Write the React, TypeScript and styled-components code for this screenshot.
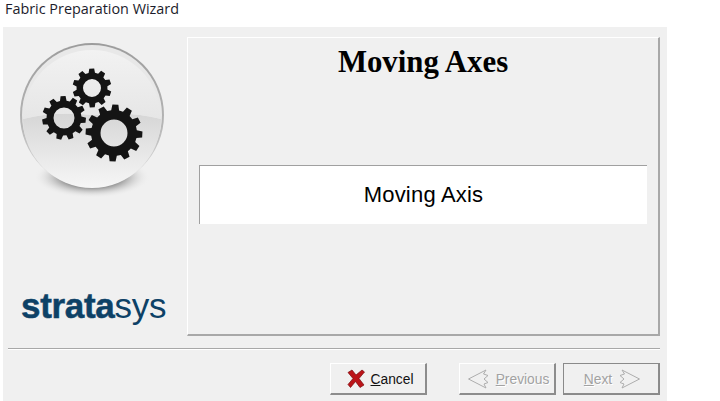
import styled, { createGlobalStyle } from 'styled-components';

const GlobalStyle = createGlobalStyle`
  html, body {
    margin: 0;
    background: #fff;
  }
`;

// toothed wheel with a round hole, drawn with evenodd
const gearPath = (cx: number, cy: number, outer: number, root: number, hole: number, teeth: number, start = 0) => {
  const step = (Math.PI * 2) / teeth;
  const pts: string[] = [];
  for (let i = 0; i < teeth; i++) {
    const a = start + i * step;
    const corners: [number, number][] = [
      [root, a - step * 0.33],
      [outer, a - step * 0.2],
      [outer, a + step * 0.2],
      [root, a + step * 0.33],
    ];
    corners.forEach(([r, t]) => {
      pts.push(`${(cx + r * Math.cos(t)).toFixed(2)} ${(cy + r * Math.sin(t)).toFixed(2)}`);
    });
  }
  const ring = `M${cx - hole} ${cy}a${hole} ${hole} 0 1 0 ${hole * 2} 0a${hole} ${hole} 0 1 0 ${-hole * 2} 0Z`;
  return `M${pts.join('L')}Z${ring}`;
};

const GearBall = () => (
  <BallSvg viewBox="0 0 184 170" width="184" height="170">
    <defs>
      <linearGradient id="ballRim" x1="0" y1="0" x2="0" y2="1">
        <stop offset="0%" stopColor="#9c9c9c" />
        <stop offset="55%" stopColor="#b4b4b4" />
        <stop offset="100%" stopColor="#e2e2e2" />
      </linearGradient>
      <linearGradient id="ballTop" x1="0" y1="0" x2="0" y2="1">
        <stop offset="0%" stopColor="#f2f2f2" />
        <stop offset="100%" stopColor="#e6e6e6" />
      </linearGradient>
      <linearGradient id="ballLow" x1="0" y1="0" x2="0" y2="1">
        <stop offset="0%" stopColor="#d6d6d6" />
        <stop offset="100%" stopColor="#f6f6f6" />
      </linearGradient>
      <radialGradient id="ballShadow" cx="50%" cy="50%" r="50%">
        <stop offset="45%" stopColor="#7c7c7c" />
        <stop offset="100%" stopColor="#f0f0f0" stopOpacity="0" />
      </radialGradient>
    </defs>
    <ellipse cx="89" cy="140" rx="58" ry="21" fill="url(#ballShadow)" />
    <circle cx="89" cy="78" r="72" fill="url(#ballRim)" />
    <circle cx="89" cy="78" r="70" fill="#e8e8e8" />
    <path d="M20 82a69 69 0 0 0 138 0q-30 -8 -69 -4q-39 -4 -69 4Z" fill="url(#ballLow)" />
    <path d="M20 82a69 69 0 1 1 138 0q-30 -8 -69 -4q-39 -4 -69 4Z" fill="url(#ballTop)" />
    <GearPath d={gearPath(89, 51, 19.5, 15.5, 9, 10, 0.3)} />
    <GearPath d={gearPath(61, 81, 22, 17.5, 10.5, 11, 0.1)} />
    <GearPath d={gearPath(111, 96, 28.5, 23, 13.5, 12, 0.05)} />
  </BallSvg>
);

const CancelIcon = () => (
  <svg width="18" height="19" viewBox="0 0 18 19">
    <path
      d="M1 3.5L5 1L9 6L15 1L17.5 3L12 9.5L17 16L13 18.5L8.5 12.5L3.5 18.5L1 15.5L6 9.5Z"
      fill="#bb1419"
      stroke="#7a0a0d"
      strokeWidth="0.7"
      strokeLinejoin="round"
    />
  </svg>
);

const ArrowLeft = () => (
  <svg width="22" height="20" viewBox="0 0 22 20" fill="none">
    <path
      d="M0.5 10L18 1L15.5 5L20 6.5L16 10L20 13.5L16 15L18 19Z"
      stroke="#adadad"
      strokeWidth="1"
    />
  </svg>
);

const ArrowRight = () => (
  <svg width="22" height="20" viewBox="0 0 22 20" fill="none">
    <path
      d="M21.5 10L4 1L6.5 5L2 6.5L6 10L2 13.5L6 15L4 19Z"
      stroke="#adadad"
      strokeWidth="1"
    />
  </svg>
);

const App = () => (
  <Page>
    <GlobalStyle />
    <TitleBar>Fabric Preparation Wizard</TitleBar>
    <Dialog>
      <Body>
        <Side>
          <GearBall />
          <Logo>
            <b>strata</b>sys
          </Logo>
        </Side>
        <Panel>
          <Heading>Moving Axes</Heading>
          <AxisBox>Moving Axis</AxisBox>
        </Panel>
      </Body>
      <Separator />
      <Footer>
        <WizardButton $shift={4}>
          <CancelIcon />
          <ButtonLabel>
            <u>C</u>ancel
          </ButtonLabel>
        </WizardButton>
        <NavButtons>
          <WizardButton disabled $shift={3}>
            <ArrowLeft />
            <ButtonLabel>
              <u>P</u>revious
            </ButtonLabel>
          </WizardButton>
          <WizardButton disabled $isDefault $shift={2}>
            <ButtonLabel>
              <u>N</u>ext
            </ButtonLabel>
            <ArrowRight />
          </WizardButton>
        </NavButtons>
      </Footer>
    </Dialog>
  </Page>
);

export default App;

const Page = styled.div`
  width: 720px;
  height: 401px;
  overflow: hidden;
  display: flex;
  flex-direction: column;
`;

const TitleBar = styled.div`
  height: 27px;
  padding: 0 0 0 5px;
  box-sizing: border-box;
  font: 14.4px/18px 'Open Sans', sans-serif;
  color: #1c1c2c;
`;

const Dialog = styled.div`
  width: 664px;
  height: 374px;
  margin-left: 3px;
  padding: 10px 7px 0 0;
  box-sizing: border-box;
  background: #f0f0f0;
`;

const Body = styled.div`
  display: flex;
  height: 299px;
`;

const Side = styled.div`
  width: 184px;
  display: flex;
  flex-direction: column;
`;

const BallSvg = styled.svg`
  display: block;
`;

const GearPath = styled.path`
  fill: #141414;
  fill-rule: evenodd;
`;

const Logo = styled.div`
  margin-top: auto;
  padding: 0 0 10px 18px;
  font: 35px/40px 'Liberation Sans', Arial, sans-serif;
  letter-spacing: -0.3px;
  color: #0d4166;

  b {
    font-weight: 700;
    -webkit-text-stroke: 0.5px #0d4166;
  }
`;

const Panel = styled.div`
  flex: 1;
  padding: 5px 11px 0;
  box-sizing: border-box;
  border-top: 1px solid #fff;
  border-left: 1px solid #fff;
  border-right: 2px solid #a8a8a8;
  border-bottom: 2px solid #a8a8a8;
`;

const Heading = styled.h1`
  margin: 0;
  height: 122px;
  font: 700 30.8px/38px 'Liberation Serif', 'Times New Roman', serif;
  color: #000;
  text-align: center;
`;

const AxisBox = styled.div`
  height: 59px;
  display: flex;
  align-items: center;
  justify-content: center;
  background: #fff;
  border-top: 1px solid #a0a0a0;
  border-left: 1px solid #a0a0a0;
  box-sizing: border-box;
  font: 22px/26px 'Liberation Sans', Arial, sans-serif;
  letter-spacing: 0.2px;
  color: #000;
`;

const Separator = styled.div`
  height: 2px;
  margin: 12px 0 0 5px;
  background: linear-gradient(#a8a8a8 50%, #fff 50%);
`;

const Footer = styled.div`
  display: flex;
  justify-content: flex-end;
  align-items: flex-start;
  gap: 32px;
  margin-top: 13px;
`;

const NavButtons = styled.div`
  display: flex;
  gap: 7px;
`;

const ButtonLabel = styled.span`
  padding-top: 2px;
`;

const WizardButton = styled.button<{ $isDefault?: boolean; $shift?: number }>`
  width: 97px;
  height: 32px;
  padding: 0 0 0 ${({ $shift }) => $shift ?? 0}px;
  display: flex;
  align-items: center;
  justify-content: center;
  gap: 6px;
  box-sizing: border-box;
  background: #f0f0f0;
  border-style: solid;
  border-width: 1px 2px 2px 1px;
  border-color: #fff #8c8c8c #8c8c8c #fff;
  outline: ${({ $isDefault }) => ($isDefault ? '1px solid #8a8a8a' : 'none')};
  outline-offset: -1px;
  font: 13.8px/18px 'Liberation Sans', Arial, sans-serif;
  color: #111;

  &:disabled {
    color: #a2a2a2;
    text-shadow: 1px 1px 0 #fff;
  }
`;
